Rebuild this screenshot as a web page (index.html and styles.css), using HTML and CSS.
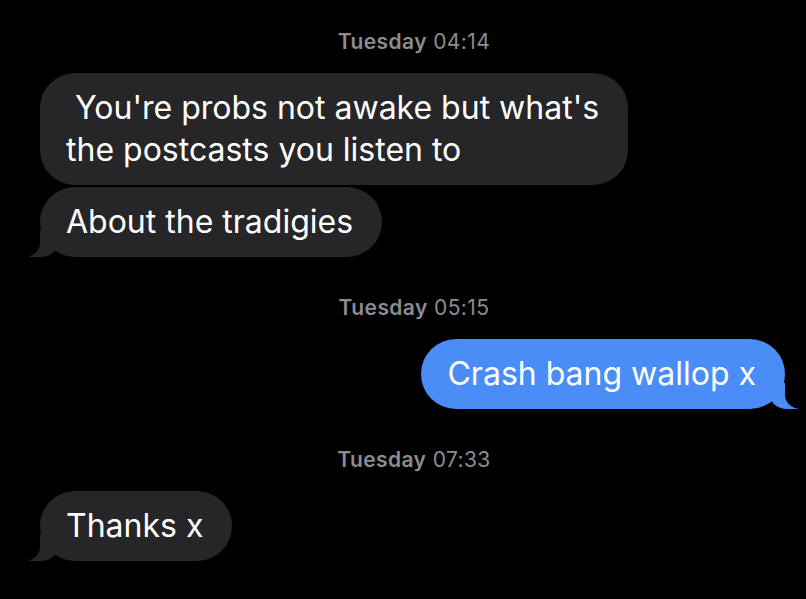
FILE: index.html
```html
<!DOCTYPE html>
<html lang="en">
<head>
<meta charset="utf-8">
<title>Messages</title>
<link rel="stylesheet" href="styles.css">
</head>
<body>
<main class="chat">
  <div class="stamp"><b>Tuesday</b> 04:14</div>
  <div class="row recv-row">
    <div class="bubble recv wide">&nbsp;You're probs not awake but what's the postcasts you listen to</div>
  </div>
  <div class="row recv-row tight">
    <div class="bubble recv tail">About the tradigies</div>
  </div>
  <div class="stamp"><b>Tuesday</b> 05:15</div>
  <div class="row sent-row">
    <div class="bubble sent tail">Crash bang wallop x</div>
  </div>
  <div class="stamp"><b>Tuesday</b> 07:33</div>
  <div class="row recv-row">
    <div class="bubble recv tail">Thanks x</div>
  </div>
</main>
</body>
</html>
```

FILE: styles.css
```css
html, body {
  margin: 0;
  padding: 0;
  background: #000;
}
body {
  width: 806px;
  height: 599px;
  overflow: hidden;
  font-family: Inter, "Noto Sans", sans-serif;
  color: #fff;
}
.chat {
  display: flex;
  flex-direction: column;
  padding: 30px 0 0;
}
.stamp {
  text-align: center;
  padding-left: 22px;
  font-size: 21px;
  letter-spacing: 0.4px;
  line-height: 24px;
  color: #8c8c91;
  margin: 39px 0 19px;
}
.stamp:first-child {
  margin-top: 0;
}
.stamp b {
  font-weight: 600;
}
.row {
  display: flex;
}
.recv-row {
  padding-left: 40px;
}
.sent-row {
  justify-content: flex-end;
  padding-right: 21px;
}
.tight {
  margin-top: 2px;
}
.bubble {
  position: relative;
  font-size: 32px;
  line-height: 42px;
  padding: 14px 29px 14px 26px;
  border-radius: 35px;
}
.wide {
  max-width: 541px;
  padding-right: 21px;
}
.recv {
  background: #262629;
}
.sent {
  background: #4a8df7;
}
.tail::before,
.tail::after {
  content: "";
  position: absolute;
  bottom: 0;
  height: 26px;
}
.recv.tail::before {
  left: -11px;
  width: 30px;
  background: #262629;
  border-bottom-right-radius: 18px 16px;
}
.recv.tail::after {
  left: -40px;
  width: 40px;
  background: #000;
  border-bottom-right-radius: 16px 14px;
}
.sent.tail::before {
  right: -14px;
  width: 30px;
  background: #4a8df7;
  border-bottom-left-radius: 18px 16px;
}
.sent.tail::after {
  right: -40px;
  width: 40px;
  background: #000;
  border-bottom-left-radius: 16px 14px;
}
```
